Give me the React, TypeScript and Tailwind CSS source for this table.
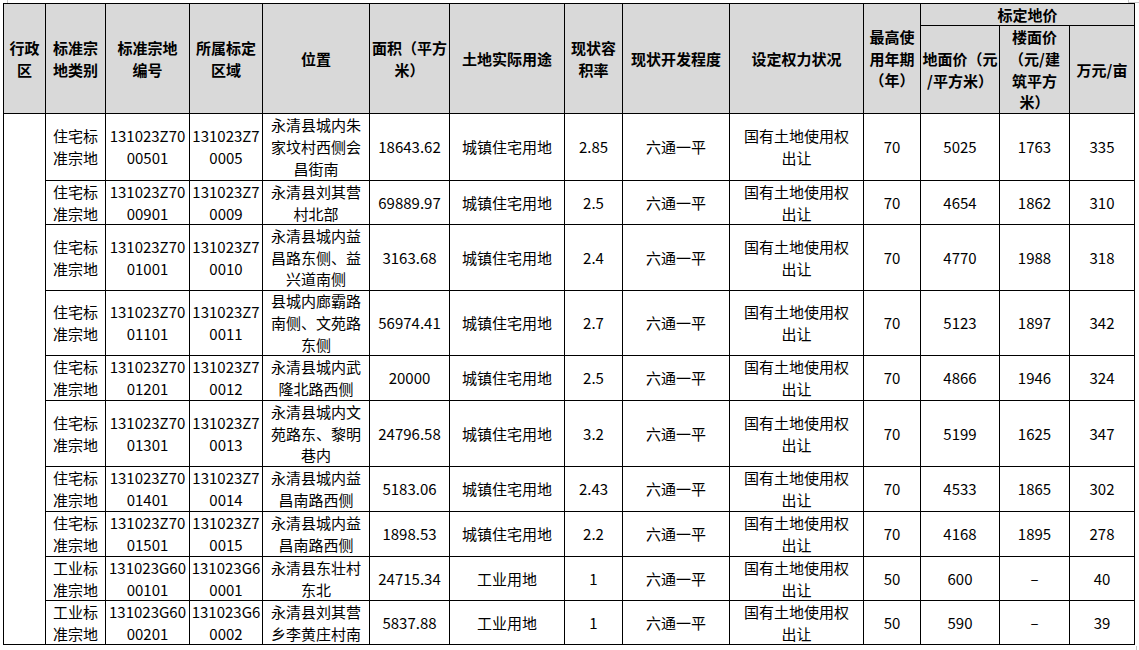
import React from "react";

type CellProps = {
  lines: string[];
  head?: boolean;
  className?: string;
};

function Cell({ lines, head, className = "" }: CellProps) {
  return (
    <div
      className={`flex flex-col items-center justify-center text-center overflow-visible ${
        head ? "bg-[#d9d9d9] font-bold" : "bg-white"
      } ${className}`}
    >
      {lines.map((l, i) => (
        <span key={i} className="block whitespace-nowrap">
          {l}
        </span>
      ))}
    </div>
  );
}

type Row = {
  type: string[];
  code: string[];
  zone: string[];
  loc: string[];
  area: string;
  use: string;
  far: string;
  dev: string;
  right: string[];
  years: string;
  land: string;
  floor: string;
  mu: string;
};

const res = ["住宅标", "准宗地"];
const ind = ["工业标", "准宗地"];
const right = ["国有土地使用权", "出让"];

const rows: Row[] = [
  { type: res, code: ["131023Z70", "00501"], zone: ["131023Z7", "0005"], loc: ["永清县城内朱", "家坟村西侧会", "昌街南"], area: "18643.62", use: "城镇住宅用地", far: "2.85", dev: "六通一平", right, years: "70", land: "5025", floor: "1763", mu: "335" },
  { type: res, code: ["131023Z70", "00901"], zone: ["131023Z7", "0009"], loc: ["永清县刘其营", "村北部"], area: "69889.97", use: "城镇住宅用地", far: "2.5", dev: "六通一平", right, years: "70", land: "4654", floor: "1862", mu: "310" },
  { type: res, code: ["131023Z70", "01001"], zone: ["131023Z7", "0010"], loc: ["永清县城内益", "昌路东侧、益", "兴道南侧"], area: "3163.68", use: "城镇住宅用地", far: "2.4", dev: "六通一平", right, years: "70", land: "4770", floor: "1988", mu: "318" },
  { type: res, code: ["131023Z70", "01101"], zone: ["131023Z7", "0011"], loc: ["县城内廊霸路", "南侧、文苑路", "东侧"], area: "56974.41", use: "城镇住宅用地", far: "2.7", dev: "六通一平", right, years: "70", land: "5123", floor: "1897", mu: "342" },
  { type: res, code: ["131023Z70", "01201"], zone: ["131023Z7", "0012"], loc: ["永清县城内武", "隆北路西侧"], area: "20000", use: "城镇住宅用地", far: "2.5", dev: "六通一平", right, years: "70", land: "4866", floor: "1946", mu: "324" },
  { type: res, code: ["131023Z70", "01301"], zone: ["131023Z7", "0013"], loc: ["永清县城内文", "苑路东、黎明", "巷内"], area: "24796.58", use: "城镇住宅用地", far: "3.2", dev: "六通一平", right, years: "70", land: "5199", floor: "1625", mu: "347" },
  { type: res, code: ["131023Z70", "01401"], zone: ["131023Z7", "0014"], loc: ["永清县城内益", "昌南路西侧"], area: "5183.06", use: "城镇住宅用地", far: "2.43", dev: "六通一平", right, years: "70", land: "4533", floor: "1865", mu: "302" },
  { type: res, code: ["131023Z70", "01501"], zone: ["131023Z7", "0015"], loc: ["永清县城内益", "昌南路西侧"], area: "1898.53", use: "城镇住宅用地", far: "2.2", dev: "六通一平", right, years: "70", land: "4168", floor: "1895", mu: "278" },
  { type: ind, code: ["131023G60", "00101"], zone: ["131023G6", "0001"], loc: ["永清县东壮村", "东北"], area: "24715.34", use: "工业用地", far: "1", dev: "六通一平", right, years: "50", land: "600", floor: "–", mu: "40" },
  { type: ind, code: ["131023G60", "00201"], zone: ["131023G6", "0002"], loc: ["永清县刘其营", "乡李黄庄村南"], area: "5837.88", use: "工业用地", far: "1", dev: "六通一平", right, years: "50", land: "590", floor: "–", mu: "39" },
];

export default function App() {
  return (
    <div
      className="relative w-[1139px] h-[650px] bg-white text-black text-[15px] leading-[21.8px]"
      style={{ fontFamily: '"Noto Sans CJK SC", "Noto Sans", sans-serif' }}
    >
      {/* crop marks */}
      <div className="absolute left-[7px] top-0 w-px h-[3px] bg-[#c8c8c8]" />
      <div className="absolute left-[1128px] top-0 w-px h-[3px] bg-[#c8c8c8]" />
      <div className="absolute left-[1128px] top-[2px] w-[11px] h-px bg-[#c8c8c8]" />
      <div className="absolute left-[1136px] top-[646px] w-px h-[4px] bg-[#c8c8c8]" />

      <div className="absolute left-[3px] top-[3px] grid grid-cols-[41px_59px_83px_72px_106px_79px_114px_57px_106px_133px_56px_78px_69px_64px] grid-rows-[21px_87px_66px_43px_65px_64px_44px_65px_44px_44px_43px_43px] gap-px bg-black p-px">
        <Cell head className="row-span-2" lines={["行政", "区"]} />
        <Cell head className="row-span-2" lines={["标准宗", "地类别"]} />
        <Cell head className="row-span-2" lines={["标准宗地", "编号"]} />
        <Cell head className="row-span-2" lines={["所属标定", "区域"]} />
        <Cell head className="row-span-2" lines={["位置"]} />
        <Cell head className="row-span-2" lines={["面积（平方", "米）"]} />
        <Cell head className="row-span-2" lines={["土地实际用途"]} />
        <Cell head className="row-span-2" lines={["现状容", "积率"]} />
        <Cell head className="row-span-2" lines={["现状开发程度"]} />
        <Cell head className="row-span-2" lines={["设定权力状况"]} />
        <Cell head className="row-span-2" lines={["最高使", "用年期", "（年）"]} />
        <Cell head className="col-span-3" lines={["标定地价"]} />
        <Cell head lines={["地面价（元", "/平方米）"]} />
        <Cell head lines={["楼面价", "（元/建", "筑平方", "米）"]} />
        <Cell head lines={["万元/亩"]} />

        <Cell className="row-span-10" lines={[""]} />
        {rows.map((r, i) => (
          <React.Fragment key={i}>
            <Cell lines={r.type} />
            <Cell lines={r.code} />
            <Cell lines={r.zone} />
            <Cell lines={r.loc} />
            <Cell lines={[r.area]} />
            <Cell lines={[r.use]} />
            <Cell lines={[r.far]} />
            <Cell lines={[r.dev]} />
            <Cell lines={r.right} />
            <Cell lines={[r.years]} />
            <Cell lines={[r.land]} />
            <Cell lines={[r.floor]} />
            <Cell lines={[r.mu]} />
          </React.Fragment>
        ))}
      </div>
    </div>
  );
}
